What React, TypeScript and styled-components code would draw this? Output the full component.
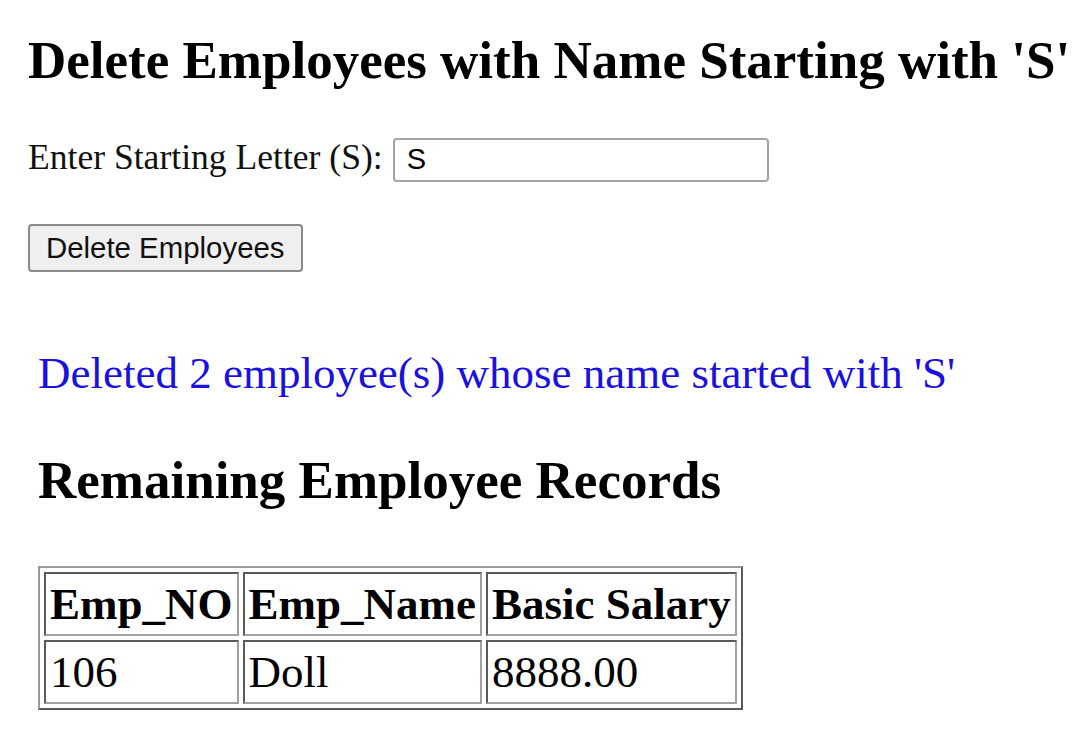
import React from "react";
import styled, { createGlobalStyle } from "styled-components";

const GlobalStyle = createGlobalStyle`
  html, body { margin: 0; padding: 0; background: #ffffff; }
  body { font-family: "Liberation Serif", "Times New Roman", serif; color: #000; }
`;

const Page = styled.div`
  padding: 30px 0 0 28px;
  display: flex;
  flex-direction: column;
  align-items: flex-start;
`;

const Title = styled.h2`
  margin: 0;
  font-size: 53px;
  line-height: 61px;
  font-weight: bold;
  white-space: nowrap;
`;

const FormRow = styled.div`
  margin-top: 46px;
  display: flex;
  align-items: baseline;
  gap: 10px;
`;

const Label = styled.label`
  font-size: 35.6px;
  line-height: 40px;
  color: #111;
`;

const TextInput = styled.input`
  box-sizing: border-box;
  width: 376px;
  height: 44px;
  padding: 2px 12px;
  border: 2px solid #a3a3a3;
  border-radius: 4px;
  font-family: "Liberation Sans", Arial, sans-serif;
  font-size: 29px;
  color: #000;
  background: #fff;
  outline: none;
`;

const Button = styled.button`
  margin-top: 42px;
  box-sizing: border-box;
  height: 48px;
  padding: 0 16px;
  border: 2px solid #8a8a8a;
  border-radius: 4px;
  background: #efefef;
  font-family: "Liberation Sans", Arial, sans-serif;
  font-size: 29.4px;
  color: #111;
  cursor: pointer;
`;

const Result = styled.section`
  padding-left: 10px;
  display: flex;
  flex-direction: column;
  align-items: flex-start;
`;

const Message = styled.p`
  margin: 76px 0 0;
  font-size: 45px;
  line-height: 50px;
  color: #1a10e0;
  white-space: nowrap;
`;

const SubTitle = styled(Title)`
  margin-top: 52px;
`;

const Table = styled.table`
  margin-top: 55px;
  border-collapse: separate;
  border-spacing: 4px;
  border: 2px solid;
  border-color: #9a9a9a #5a5a5a #5a5a5a #9a9a9a;
  font-size: 45px;
`;

const HeadCell = styled.th`
  padding: 4px 4px;
  text-align: left;
  font-weight: bold;
  line-height: 52px;
  border: 2px solid;
  border-color: #5a5a5a #a0a0a0 #a0a0a0 #5a5a5a;
  white-space: nowrap;
`;

const Cell = styled.td`
  padding: 4px 4px;
  text-align: left;
  line-height: 52px;
  border: 2px solid;
  border-color: #5a5a5a #a0a0a0 #a0a0a0 #5a5a5a;
  white-space: nowrap;
`;

const employees = [{ no: "106", name: "Doll", salary: "8888.00" }];

export default function App() {
  return (
    <>
      <GlobalStyle />
      <Page>
        <Title>Delete Employees with Name Starting with 'S'</Title>
        <FormRow>
          <Label htmlFor="letter">Enter Starting Letter (S):</Label>
          <TextInput id="letter" defaultValue="S" />
        </FormRow>
        <Button type="button">Delete Employees</Button>
        <Result>
          <Message>Deleted 2 employee(s) whose name started with 'S'</Message>
          <SubTitle>Remaining Employee Records</SubTitle>
          <Table>
            <thead>
              <tr>
                <HeadCell>Emp_NO</HeadCell>
                <HeadCell>Emp_Name</HeadCell>
                <HeadCell>Basic Salary</HeadCell>
              </tr>
            </thead>
            <tbody>
              {employees.map((e) => (
                <tr key={e.no}>
                  <Cell>{e.no}</Cell>
                  <Cell>{e.name}</Cell>
                  <Cell>{e.salary}</Cell>
                </tr>
              ))}
            </tbody>
          </Table>
        </Result>
      </Page>
    </>
  );
}
